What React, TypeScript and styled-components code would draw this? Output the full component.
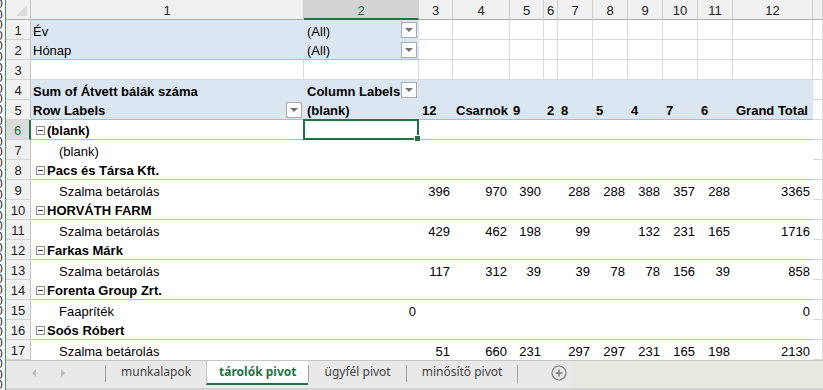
import React from 'react';
import styled, { createGlobalStyle, css } from 'styled-components';

const GRID = '#dadada';
const BLUE_FILL = '#dce6f1';
const BLUE_LINE = '#9bc2e6';
const GREEN = '#217346';
const COLS = [273, 115, 34, 57, 34, 14, 35, 35, 35, 35, 35, 80];

const GlobalStyle = createGlobalStyle`
  html, body { margin: 0; padding: 0; background: #fff; }
  body { font-family: "Liberation Sans", Arial, sans-serif; }
`;

const Frame = styled.div`
  display: flex;
  width: 823px;
  height: 390px;
  overflow: hidden;
  background: #fff;
`;

const EdgeStrip = styled.div`
  width: 5px;
  flex: none;
  overflow: hidden;
  border-right: 1px solid #3f9b4f;
  background: #fff;
`;

const EdgeDigits = styled.div`
  margin-left: -4px;
  margin-top: -1px;
  font: 12px/10.6px "Liberation Sans", sans-serif;
  color: #222;
  white-space: pre;
`;

const Workbook = styled.div`
  flex: 1;
  min-width: 0;
  display: flex;
  flex-direction: column;
`;

const SheetGrid = styled.div`
  display: grid;
  grid-template-columns: 25px ${COLS.map((w) => `${w}px`).join(' ')} 1fr;
  grid-auto-rows: 20px;
  height: 360px;
  font-size: 13px;
  color: #000;
`;

const Corner = styled.div`
  position: relative;
  background: #f1f1f1;
  border-right: 1px solid #c4c4c4;
  border-bottom: 1px solid #ababab;
  &::after {
    content: '';
    position: absolute;
    right: 3px;
    bottom: 3px;
    width: 0;
    height: 0;
    border-left: 11px solid transparent;
    border-bottom: 11px solid #dcdcdc;
  }
`;

const ColHead = styled.div<{ $active?: boolean }>`
  display: flex;
  align-items: center;
  justify-content: center;
  box-sizing: border-box;
  background: ${(p) => (p.$active ? '#d3d3d3' : '#f1f1f1')};
  color: ${(p) => (p.$active ? GREEN : '#222')};
  border-right: 1px solid #d0d0d0;
  border-bottom: ${(p) => (p.$active ? `2px solid ${GREEN}` : '1px solid #ababab')};
  padding-top: ${(p) => (p.$active ? '2px' : '1px')};
`;

const RowHead = styled.div<{ $active?: boolean }>`
  display: flex;
  align-items: center;
  justify-content: center;
  box-sizing: border-box;
  padding-top: 2px;
  background: ${(p) => (p.$active ? '#dcdcdc' : '#f1f1f1')};
  color: ${(p) => (p.$active ? GREEN : '#222')};
  border-right: ${(p) => (p.$active ? `2px solid ${GREEN}` : '1px solid #c4c4c4')};
  border-bottom: 1px solid #d5d5d5;
`;

type Tone = 'grid' | 'blue' | 'plain';

const Cell = styled.div<{
  $tone: Tone;
  $line?: boolean;
  $bold?: boolean;
  $right?: boolean;
  $indent: number;
}>`
  position: relative;
  display: flex;
  align-items: center;
  justify-content: ${(p) => (p.$right ? 'flex-end' : 'flex-start')};
  box-sizing: border-box;
  padding: 2px 3px 0 ${(p) => p.$indent}px;
  min-width: 0;
  white-space: nowrap;
  font-weight: ${(p) => (p.$bold ? 700 : 400)};
  background: ${(p) => (p.$tone === 'blue' ? BLUE_FILL : '#fff')};
  ${(p) =>
    p.$tone === 'grid' &&
    css`
      border-right: 1px solid ${GRID};
      border-bottom: 1px solid ${GRID};
    `}
  ${(p) =>
    p.$line &&
    css`
      border-bottom: 1px solid ${BLUE_LINE};
    `}
`;

const DropButton = styled.span`
  margin-left: auto;
  margin-right: -1px;
  margin-top: -2px;
  width: 16px;
  height: 16px;
  flex: none;
  box-sizing: border-box;
  border: 1px solid #acacac;
  background: #fdfdfd;
  display: flex;
  align-items: center;
  justify-content: center;
  &::after {
    content: '';
    border-left: 4px solid transparent;
    border-right: 4px solid transparent;
    border-top: 4px solid #727272;
  }
`;

const Toggle = styled.span`
  width: 9px;
  height: 9px;
  flex: none;
  box-sizing: border-box;
  border: 1px solid #8f8f8f;
  background: #fff;
  margin-right: 2px;
  margin-top: -1px;
  display: flex;
  align-items: center;
  justify-content: center;
  &::before {
    content: '';
    width: 5px;
    height: 1px;
    background: #333;
  }
`;

const Selection = styled.span`
  position: absolute;
  left: -1px;
  top: -1px;
  right: 0;
  bottom: -1px;
  border: 2px solid ${GREEN};
  pointer-events: none;
  z-index: 2;
  &::after {
    content: '';
    position: absolute;
    right: -4px;
    bottom: -4px;
    width: 5px;
    height: 5px;
    background: ${GREEN};
    border: 1px solid #fff;
  }
`;

const TabBar = styled.div`
  display: flex;
  height: 30px;
  box-sizing: border-box;
  border-top: 1px solid #c6c6c6;
  border-bottom: 2px solid #d2d2d2;
  font-family: "Noto Sans", "Open Sans", sans-serif;
  font-size: 12px;
`;

const TabStrip = styled.div`
  display: flex;
  align-items: flex-start;
  background: #e9e9e9;
`;

const NavArea = styled.div`
  width: 99px;
  height: 24px;
  box-sizing: border-box;
  display: flex;
  align-items: center;
  padding-left: 26px;
  gap: 25px;
`;

const NavArrow = styled.span<{ $dir: 'left' | 'right' }>`
  width: 0;
  height: 0;
  border-top: 4px solid transparent;
  border-bottom: 4px solid transparent;
  ${(p) =>
    p.$dir === 'left'
      ? css`border-right: 4px solid #bdbdbd;`
      : css`border-left: 4px solid #bdbdbd;`}
`;

const SheetTab = styled.div<{ $active?: boolean }>`
  position: relative;
  height: 24px;
  box-sizing: border-box;
  display: flex;
  align-items: center;
  padding: 0 ${(p) => (p.$active ? 12 : 15)}px 1px;
  color: ${(p) => (p.$active ? GREEN : '#444')};
  font-weight: ${(p) => (p.$active ? 700 : 400)};
  background: ${(p) => (p.$active ? '#fff' : 'transparent')};
  border-bottom: 2px solid ${(p) => (p.$active ? GREEN : 'transparent')};
  border-left: 1px solid ${(p) => (p.$active ? '#c6c6c6' : 'transparent')};
  &::before {
    content: '';
    position: absolute;
    left: -1px;
    top: 4px;
    bottom: 1px;
    width: 1px;
    background: ${(p) => (p.$active ? 'transparent' : '#a2a2a2')};
  }
`;

const TabEnd = styled.div`
  width: 1px;
  height: 18px;
  margin-top: 4px;
  background: #a2a2a2;
`;

const AddArea = styled.div`
  width: 55px;
  height: 24px;
  display: flex;
  align-items: center;
  padding-left: 33px;
  box-sizing: border-box;
`;

const Filler = styled.div`
  flex: 1;
  background: #e5e9e0;
`;

type CellDef = {
  text?: string;
  tone: Tone;
  bold?: boolean;
  right?: boolean;
  indent?: number;
  drop?: boolean;
  toggle?: boolean;
  line?: boolean;
  selected?: boolean;
};

const rep = (n: number, d: CellDef): CellDef[] => Array.from({ length: n }, () => ({ ...d }));

const groups = [
  { name: '(blank)', item: '(blank)', vals: [] as string[] },
  { name: 'Pacs és Társa Kft.', item: 'Szalma betárolás', vals: ['', '396', '970', '390', '', '288', '288', '388', '357', '288', '3365'] },
  { name: 'HORVÁTH FARM', item: 'Szalma betárolás', vals: ['', '429', '462', '198', '', '99', '', '132', '231', '165', '1716'] },
  { name: 'Farkas Márk', item: 'Szalma betárolás', vals: ['', '117', '312', '39', '', '39', '78', '78', '156', '39', '858'] },
  { name: 'Forenta Group Zrt.', item: 'Faapríték', vals: ['0', '', '', '', '', '', '', '', '', '', '0'] },
  { name: 'Soós Róbert', item: 'Szalma betárolás', vals: ['', '51', '660', '231', '', '297', '297', '231', '165', '198', '2130'] },
];

const colLabels = ['12', 'Csarnok', '9', '2', '8', '5', '4', '7', '6', 'Grand Total'];

const buildRows = (): CellDef[][] => {
  const rows: CellDef[][] = [];
  const grid: CellDef = { tone: 'grid' };
  rows.push([
    { text: 'Év', tone: 'blue' },
    { text: '(All)', tone: 'blue', drop: true },
    ...rep(11, grid),
  ]);
  rows.push([
    { text: 'Hónap', tone: 'blue', line: true },
    { text: '(All)', tone: 'blue', drop: true, line: true },
    ...rep(11, grid),
  ]);
  rows.push(rep(13, grid));
  rows.push([
    { text: 'Sum of Átvett bálák száma', tone: 'blue', bold: true },
    { text: 'Column Labels', tone: 'blue', bold: true, drop: true },
    ...rep(10, { tone: 'blue' }),
    grid,
  ]);
  rows.push([
    { text: 'Row Labels', tone: 'blue', bold: true, drop: true, line: true },
    { text: '(blank)', tone: 'blue', bold: true, line: true },
    ...colLabels.map((t) => ({ text: t, tone: 'blue' as Tone, bold: true, line: true })),
    grid,
  ]);
  groups.forEach((g, gi) => {
    rows.push([
      { text: g.name, tone: 'plain', bold: true, toggle: true, indent: 5, line: true },
      { tone: 'plain', line: true, selected: gi === 0 },
      ...rep(10, { tone: 'plain', line: true }),
      grid,
    ]);
    rows.push([
      { text: g.item, tone: 'plain', indent: 28 },
      ...Array.from({ length: 11 }, (_, i) => ({
        text: g.vals[i] || undefined,
        tone: 'plain' as Tone,
        right: true,
      })),
      grid,
    ]);
  });
  return rows;
};

const rows = buildRows();
const edgeText = Array.from({ length: 38 }, () => '0').join('\n');

export default function App() {
  return (
    <Frame>
      <GlobalStyle />
      <EdgeStrip>
        <EdgeDigits>{edgeText}</EdgeDigits>
      </EdgeStrip>
      <Workbook>
        <SheetGrid>
          <Corner />
          {COLS.map((_, i) => (
            <ColHead key={`h${i}`} $active={i === 1}>
              {i + 1}
            </ColHead>
          ))}
          <ColHead />
          {rows.map((row, ri) => (
            <React.Fragment key={`r${ri}`}>
              <RowHead $active={ri === 5}>{ri + 1}</RowHead>
              {row.map((c, ci) => (
                <Cell
                  key={`c${ri}-${ci}`}
                  $tone={c.tone}
                  $line={c.line}
                  $bold={c.bold}
                  $right={c.right}
                  $indent={c.indent ?? (ci === 0 ? 2 : 3)}
                >
                  {c.toggle && <Toggle />}
                  {c.text}
                  {c.drop && <DropButton />}
                  {c.selected && <Selection />}
                </Cell>
              ))}
            </React.Fragment>
          ))}
        </SheetGrid>
        <TabBar>
          <TabStrip>
            <NavArea>
              <NavArrow $dir="left" />
              <NavArrow $dir="right" />
            </NavArea>
            <SheetTab>munkalapok</SheetTab>
            <SheetTab $active>tárolók pivot</SheetTab>
            <SheetTab>ügyfél pivot</SheetTab>
            <SheetTab>minősítő pivot</SheetTab>
            <TabEnd />
            <AddArea>
              <svg width="16" height="16" viewBox="0 0 16 16">
                <circle cx="8" cy="8" r="7" fill="none" stroke="#7a7a7a" strokeWidth="1.2" />
                <path d="M8 4.5v7M4.5 8h7" stroke="#7a7a7a" strokeWidth="1.4" />
              </svg>
            </AddArea>
          </TabStrip>
          <Filler />
        </TabBar>
      </Workbook>
    </Frame>
  );
}
